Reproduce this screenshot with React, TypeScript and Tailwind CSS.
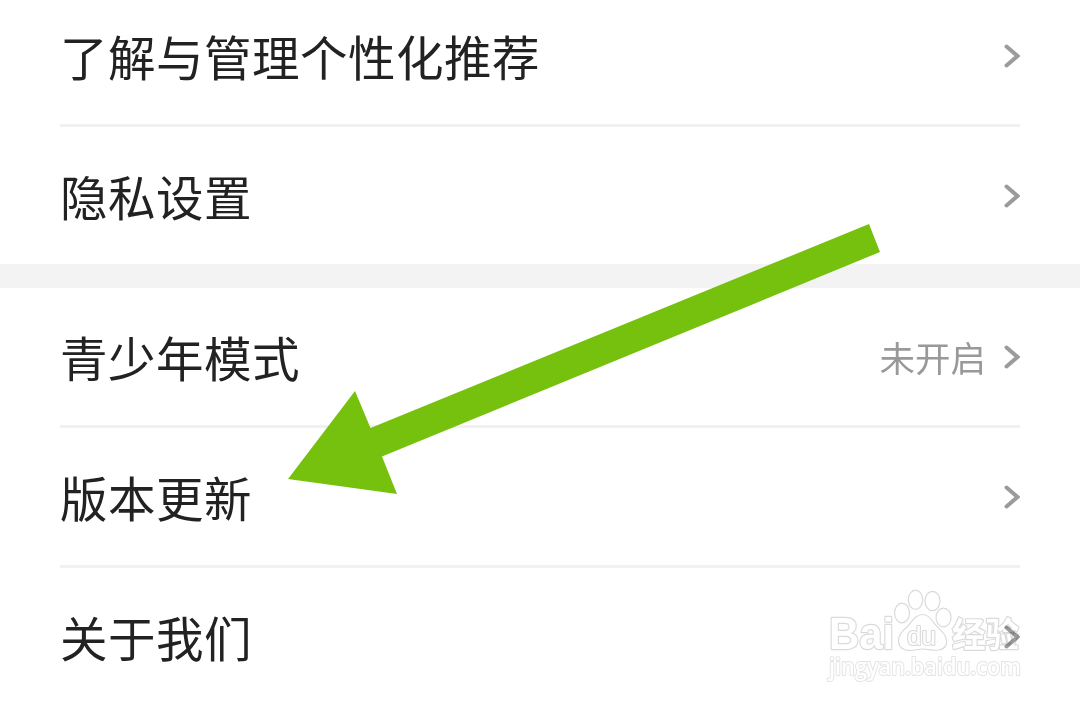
type RowProps = {
  label: string;
  value?: string;
  divider?: boolean;
};

function Chevron() {
  return (
    <svg className="shrink-0" width="20" height="28" viewBox="0 0 20 28" fill="none">
      <path d="M6.500 4.500L17.500 14L6.500 23.500" stroke="#9b9b9b" strokeWidth="4" strokeLinecap="round" />
    </svg>
  );
}

function Row({ label, value, divider = false }: RowProps) {
  return (
    <div
      className={
        divider
          ? "mx-[60px] flex h-[140px] shrink-0 items-center border-b-[3px] border-[#f1f1f1]"
          : "mx-[60px] flex h-[137px] shrink-0 items-center"
      }
    >
      <span className="flex-1 text-[47.5px] leading-[60px] tracking-[0.5px]">{label}</span>
      {value && <span className="mr-[14px] text-[35.5px] leading-[44px] text-[#999999]">{value}</span>}
      <Chevron />
    </div>
  );
}

function Arrow() {
  return (
    <svg
      className="pointer-events-none absolute top-[220px] left-[280px]"
      width="610"
      height="280"
      viewBox="280 220 610 280"
    >
      <path d="M288 479L355 391L370.5 428L869 224L880 252L382 456.500L397 494Z" fill="#76c10d" />
    </svg>
  );
}

function Watermark() {
  return (
    <svg
      className="pointer-events-none absolute top-[580px] left-[810px] mix-blend-multiply"
      width="230"
      height="110"
      viewBox="0 0 230 110"
      fill="#ffffff"
      stroke="#dadada"
      strokeWidth="1.2"
      strokeLinejoin="round"
    >
      <text x="19" y="69" fontFamily="Liberation Sans" fontWeight="700" fontSize="44" strokeWidth="2.4" paintOrder="stroke" textLength="65" lengthAdjust="spacingAndGlyphs">
        Bai
      </text>
      {/* Paw */}
      <ellipse cx="92" cy="33" rx="7.500" ry="9.800" />
      <ellipse cx="105.500" cy="19.800" rx="7.200" ry="9.600" />
      <ellipse cx="122.500" cy="21" rx="7.500" ry="9.600" />
      <ellipse cx="133.500" cy="37.500" rx="7.500" ry="9.300" />
      <path d="M113 34.500C105 34.500 102 42 97 47C92 51 88 55 88.500 61C89 68 94 71 101 70.500C106 70 109 69 113 69C118 69 123 71 129 70C135 69 138 64 136 58C134 51 128 49 124 43C120 37 117 34.500 113 34.500Z" />
      <text x="97" y="64.500" fontFamily="Liberation Sans" fontWeight="400" fontSize="25" strokeWidth="2.2" paintOrder="stroke" textLength="29" lengthAdjust="spacingAndGlyphs">
        du
      </text>
      <text x="142" y="67" fontFamily="Noto Sans CJK SC" fontWeight="700" fontSize="34" strokeWidth="2.4" paintOrder="stroke" textLength="67" lengthAdjust="spacingAndGlyphs">
        经验
      </text>
      <text x="19" y="94.500" fontFamily="Open Sans" fontWeight="600" fontSize="23" stroke="#e4e4e4" strokeWidth="2" paintOrder="stroke" textLength="192" lengthAdjust="spacingAndGlyphs">
        jingyan.baidu.com
      </text>
    </svg>
  );
}

export default function App() {
  return (
    <main className="relative h-[705px] w-[1080px] overflow-hidden bg-white font-['Noto_Sans_CJK_SC',sans-serif] text-[#222222]">
      <div className="-mt-[13px] flex flex-col">
        <Row label="了解与管理个性化推荐" divider />
        <Row label="隐私设置" />
        <div className="h-6 shrink-0 bg-[#f3f3f3]" />
        <Row label="青少年模式" value="未开启" divider />
        <Row label="版本更新" divider />
        <Row label="关于我们" />
      </div>
      <Arrow />
      <Watermark />
    </main>
  );
}
